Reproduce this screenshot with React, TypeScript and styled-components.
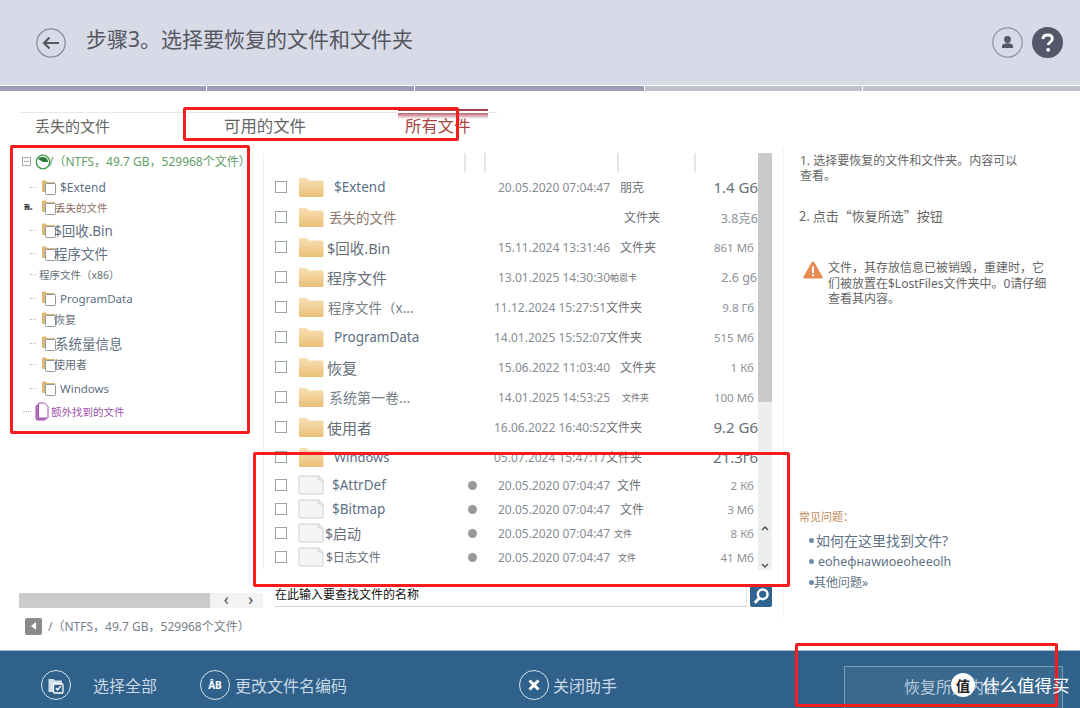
import React from 'react'
import styled, { createGlobalStyle } from 'styled-components'

const GlobalStyle = createGlobalStyle`
  html, body {
    margin: 0;
    padding: 0;
    background: #fff;
  }
  body {
    font-family: "Noto Sans", "Noto Sans CJK SC", sans-serif;
  }
`

const Page = styled.div`
  position: relative;
  width: 1080px;
  height: 708px;
  overflow: hidden;
  display: flex;
  flex-direction: column;
`

/* header */
const Header = styled.div`
  height: 85px;
  flex: none;
  background: #d8dae8;
  display: flex;
  align-items: center;
  padding: 0 17px 0 36px;
  box-sizing: border-box;
`

const Title = styled.div`
  margin: -10px 0 0 20px;
  font-size: 21px;
  color: #55585f;
  flex: 1;
`

const HeaderIcons = styled.div`
  display: flex;
  gap: 9px;
`

const Progress = styled.div`
  height: 5px;
  flex: none;
  display: flex;
  gap: 1px;
  margin-top: 1px;
`

const Segment = styled.div<{ $w: number; $done: boolean }>`
  width: ${(p) => p.$w}px;
  flex: none;
  background: ${(p) => (p.$done ? '#9b9eb6' : '#bfc1d0')};
`

/* tabs */
const Tabs = styled.div`
  margin: 21px 0 0 20px;
  width: 477px;
  height: 24px;
  border-top: 1px solid #e8e8ec;
  display: flex;
  align-items: center;
`

const Tab = styled.div<{ $w: number; $pl?: number; $size?: number; $active?: boolean }>`
  width: ${(p) => p.$w}px;
  flex: none;
  box-sizing: border-box;
  padding-left: ${(p) => p.$pl ?? 0}px;
  font-size: ${(p) => p.$size ?? 16.4}px;
  color: ${(p) => (p.$active ? '#a8453f' : '#666')};
`

const Content = styled.div`
  flex: 1;
  display: grid;
  grid-template-columns: 263px 520px 1fr;
  min-height: 0;
`

/* left tree */
const TreeCol = styled.div`
  display: flex;
  flex-direction: column;
  padding-top: 11px;
`

const TreeBox = styled.div`
  height: 445px;
`

const TreeRow = styled.div<{ $h: number; $pl?: number }>`
  height: ${(p) => p.$h}px;
  display: flex;
  align-items: center;
  padding-left: ${(p) => p.$pl ?? 30}px;
  white-space: nowrap;
`

const Expander = styled.div`
  width: 7px;
  height: 7px;
  border: 1px solid #aaa;
  margin-right: 4px;
  background: linear-gradient(#aaa, #aaa) center / 5px 1px no-repeat;
  flex: none;
`

const Connector = styled.div<{ $w?: number; $mr?: number }>`
  width: ${(p) => p.$w ?? 6}px;
  height: 0;
  border-top: 1px dotted #bbb;
  margin-right: ${(p) => p.$mr ?? 6}px;
  flex: none;
`

const TinyGlyph = styled.div`
  width: 18px;
  margin-left: -6px;
  font-size: 6px;
  line-height: 8px;
  color: #111;
  font-weight: 700;
  flex: none;
`

const TreeLabel = styled.div<{ $size: number; $color: string; $ml: number }>`
  font-size: ${(p) => p.$size}px;
  color: ${(p) => p.$color};
  margin-left: ${(p) => p.$ml}px;
`

const HScroll = styled.div`
  margin-left: 19px;
  width: 244px;
  height: 15px;
  display: flex;
  background: #f2f3f4;
  color: #444;
  font-size: 16px;
  line-height: 13px;
`

const HThumb = styled.div`
  width: 191px;
  background: #cbcbcb;
`

const HArrows = styled.div`
  flex: 1;
  display: flex;
  justify-content: space-around;
  padding-left: 4px;
`

const Crumb = styled.div`
  margin: 9px 0 0 25px;
  display: flex;
  align-items: center;
  font-size: 12px;
  color: #77808a;
  white-space: nowrap;
`

const CrumbBack = styled.div`
  width: 17px;
  height: 17px;
  background: #8b8b8b;
  border-radius: 2px;
  margin-right: 6px;
  display: flex;
  align-items: center;
  justify-content: center;
  &::before {
    content: '';
    border: 4px solid transparent;
    border-right: 5px solid #fff;
    border-left: 0;
  }
`

/* table */
const TableCol = styled.div`
  display: flex;
  flex-direction: column;
  padding-top: 16px;
`

const TableWrap = styled.div`
  width: 509px;
  height: 417px;
  display: flex;
  border-left: 1px solid #eef0f2;
  box-sizing: border-box;
`

const TableMain = styled.div`
  width: 494px;
  flex: none;
`

const HeaderCells = styled.div`
  height: 19px;
  display: flex;
  padding-left: 200px;
`

const HeaderCell = styled.div<{ $w: number }>`
  width: ${(p) => p.$w}px;
  flex: none;
  border-left: 2px solid #e4e6e8;
  box-sizing: border-box;
`

const Row = styled.div<{ $compact?: boolean }>`
  height: ${(p) => (p.$compact ? 24 : 30)}px;
  display: grid;
  grid-template-columns: 12px 26px 155px 10px 222px 1fr;
  align-items: center;
  padding-left: 11px;
  white-space: nowrap;
`

const FileRows = styled.div`
  margin-top: 1px;
`

const Check = styled.div`
  width: 12px;
  height: 12px;
  border: 1px solid #9aa6ae;
  box-sizing: border-box;
  background: #fff;
`

const IconCell = styled.div`
  margin-left: 11px;
  width: 26px;
  display: flex;
`

const Name = styled.div<{ $size: number; $ml: number; $color: string }>`
  font-size: ${(p) => p.$size}px;
  margin-left: ${(p) => p.$ml + 11}px;
  color: ${(p) => p.$color};
`

const Dot = styled.div`
  width: 9px;
  height: 9px;
  border-radius: 50%;
  background: #999;
`

const Meta = styled.div`
  display: flex;
  align-items: center;
`

const DateText = styled.div<{ $ml: number }>`
  margin-left: ${(p) => p.$ml}px;
  font-size: 12px;
  color: #878d94;
`

const TypeText = styled.div<{ $size: number; $ml: number }>`
  margin-left: ${(p) => p.$ml}px;
  font-size: ${(p) => p.$size}px;
  color: #6d7176;
`

const SizeText = styled.div<{ $size: number; $mr: number }>`
  text-align: right;
  font-size: ${(p) => p.$size}px;
  margin-right: ${(p) => p.$mr}px;
  color: ${(p) => (p.$size > 14 ? '#6a7078' : '#8c9298')};
`

const VScroll = styled.div`
  width: 14px;
  flex: none;
  height: 417px;
  background: #eceef0;
  display: flex;
  flex-direction: column;
`

const VThumb = styled.div`
  height: 249px;
  background: #c9c9c9;
`

const VArrows = styled.div`
  margin-top: auto;
  height: 46px;
  display: flex;
  flex-direction: column;
  justify-content: space-between;
  align-items: center;
`

const SearchRow = styled.div`
  margin: 15px 0 0 12px;
  width: 497px;
  height: 22px;
  display: flex;
  gap: 3px;
`

const SearchInput = styled.div`
  flex: 1;
  border-bottom: 1px solid #cfd3d6;
  border-right: 1px solid #e4e6e8;
  font-size: 12px;
  color: #111;
  line-height: 20px;
`

const SearchButton = styled.div`
  width: 22px;
  height: 22px;
  background: #2f6390;
  border-radius: 2px;
  display: flex;
  align-items: center;
  justify-content: center;
`

/* side */
const Side = styled.div`
  height: 470px;
  margin-top: 11px;
  border-left: 1px solid #f2f2f2;
  padding-left: 16px;
  padding-right: 20px;
  font-size: 12px;
  line-height: 15px;
  color: #666;
  display: flex;
  flex-direction: column;
`

const SideNote = styled.div`
  margin-top: 5px;
`

const SideStep = styled.div`
  margin-top: 24px;
  font-family: "Noto Sans CJK SC", sans-serif;
  font-size: 13px;
  line-height: 18px;
  margin-left: -1px;
`

const Warning = styled.div`
  margin-top: 35px;
  display: flex;
  gap: 5px;
  margin-left: 3px;
`

const WarningBadge = styled.svg`
  flex: none;
  margin-top: 1px;
`

const WarningText = styled.div`
  width: 222px;
  line-height: 15.5px;
`

const Faq = styled.div`
  margin-top: 202px;
  margin-left: -1px;
  display: flex;
  flex-direction: column;
`

const FaqTitle = styled.div`
  font-size: 11px;
  color: #c28a58;
  height: 21px;
`

const FaqItem = styled.div<{ $size: number; $h: number; $dx: number }>`
  height: ${(p) => p.$h}px;
  display: flex;
  align-items: center;
  margin-left: 10px;
  font-size: ${(p) => p.$size}px;
  color: #5f7386;
  white-space: nowrap;
  &::before {
    content: '';
    width: 5px;
    height: 5px;
    border-radius: 50%;
    background: #6b8ba6;
    margin-right: ${(p) => p.$dx}px;
    flex: none;
  }
`

/* footer */
const Footer = styled.div`
  height: 58px;
  flex: none;
  background: #30618b;
  border-top: 1px solid #9fb8cb;
  box-sizing: border-box;
  display: flex;
  align-items: center;
  padding: 11px 0 0 41px;
  color: #c9d8e5;
  font-size: 16px;
`

const FooterAction = styled.div<{ $w: number; $gap: number }>`
  width: ${(p) => p.$w}px;
  flex: none;
  display: flex;
  align-items: center;
  gap: ${(p) => p.$gap}px;
`

const IconRing = styled.div`
  width: 30px;
  height: 30px;
  border: 1.5px solid #d5e1ea;
  border-radius: 50%;
  box-sizing: border-box;
  display: flex;
  align-items: center;
  justify-content: center;
  flex: none;
  color: #fff;
  font-size: 10px;
  font-weight: 700;
`

const RecoverButton = styled.div`
  align-self: flex-end;
  margin: 0 17px 0 auto;
  width: 219px;
  height: 42px;
  border: 1px solid #7d9eba;
  border-bottom: 0;
  background: #3a6990;
  box-sizing: border-box;
  padding: 7px 0 0 59px;
  font-size: 16px;
  color: #b9cad9;
`

/* things lying over the page */
const Annotation = styled.div<{ $x: number; $y: number; $w: number; $h: number }>`
  position: absolute;
  left: ${(p) => p.$x}px;
  top: ${(p) => p.$y}px;
  width: ${(p) => p.$w}px;
  height: ${(p) => p.$h}px;
  border: 3px solid #f81c1c;
  border-radius: 2px;
  box-sizing: border-box;
  pointer-events: none;
`

const Smear = styled.div`
  position: absolute;
  left: 398px;
  top: 109px;
  width: 90px;
  height: 10px;
  background: linear-gradient(#a8404a 0 2px, #fff 2px 4px, #b9606a 4px, rgba(255, 255, 255, 0));
`

const Watermark = styled.div`
  position: absolute;
  left: 951px;
  top: 672px;
  display: flex;
  align-items: center;
  gap: 7px;
  font-size: 17.5px;
  color: #fff;
  white-space: nowrap;
`

const WatermarkBadge = styled.div`
  width: 24px;
  height: 24px;
  border-radius: 50%;
  background: #fff;
  color: #222;
  font-size: 14px;
  font-weight: 700;
  display: flex;
  align-items: center;
  justify-content: center;
`

const TreeSvg = styled.svg`
  flex: none;
`

const BackIcon = () => (
  <svg width="30" height="30" viewBox="0 0 30 30" fill="none">
    <circle cx="15" cy="15" r="14.2" stroke="#8a8d98" strokeWidth="1.3" />
    <path d="M23 15H8M13.5 9.5 8 15l5.5 5.5" stroke="#55585f" strokeWidth="2.2" />
  </svg>
)

const UserIcon = () => (
  <svg width="31" height="31" viewBox="0 0 31 31" fill="none">
    <circle cx="15.5" cy="15.5" r="14.7" stroke="#8f919c" strokeWidth="1.2" />
    <circle cx="15.5" cy="12.5" r="3.4" fill="#55586a" />
    <path d="M10 21v-2.4c0-1.4 2.4-2.4 5.5-2.4s5.5 1 5.5 2.4V21z" fill="#55586a" />
  </svg>
)

const HelpIcon = () => (
  <svg width="31" height="31" viewBox="0 0 31 31" fill="none">
    <circle cx="15.5" cy="15.5" r="15.5" fill="#55586a" />
    <path d="M10.8 12c.3-2.7 2.2-4 4.8-4 2.8 0 4.7 1.5 4.7 3.8 0 3.2-4 3.2-4 6.2" stroke="#fff" strokeWidth="2.8" />
    <circle cx="16.2" cy="22.8" r="1.9" fill="#fff" />
  </svg>
)

const Folder = () => (
  <svg width="26" height="20" viewBox="0 0 26 20">
    <defs>
      <linearGradient id="fold" x1="0" y1="0" x2="0" y2="1">
        <stop offset="0" stopColor="#f7e0b4" />
        <stop offset="1" stopColor="#e9bf78" />
      </linearGradient>
    </defs>
    <path d="M1 2.5C1 1.5 1.7 1 2.5 1h6l2.5 2.5h13c1 0 1.5.6 1.5 1.5v13.5c0 .8-.6 1.5-1.5 1.5h-22C1.6 20 1 19.3 1 18.5z" fill="url(#fold)" />
  </svg>
)

const DocIcon = () => (
  <svg width="26" height="20" viewBox="0 0 26 20" fill="none">
    <path d="M1 2c0-.6.4-1 1-1h19l4 4v13c0 .6-.4 1-1 1H2c-.6 0-1-.4-1-1z" fill="#f5f5f5" stroke="#cfcfcf" />
    <path d="M21 1v4h4" stroke="#cfcfcf" />
  </svg>
)

const TreeFolder = () => (
  <TreeSvg width="14" height="15" viewBox="0 0 14 15">
    <path d="M0 1.5C0 1 .5.5 1 .5h3l1 1.5h7.5c.5 0 .5.5.5 1V11c0 .5-.5 1-1 1H1c-.5 0-1-.5-1-1z" fill="#dcb877" />
    <rect x="3.5" y="3.5" width="10" height="11" rx="1" fill="#fff" stroke="#8e979e" />
  </TreeSvg>
)

const RootIcon = () => (
  <TreeSvg width="17" height="17" viewBox="0 0 17 17" fill="none">
    <circle cx="8" cy="9" r="6.8" stroke="#3f9a46" strokeWidth="1.3" />
    <path d="M8 4a5 5 0 0 1 5 5H8z" fill="#2f7a38" />
    <path d="M3 6a5 5 0 0 1 5-2v5z" fill="#2f7a38" />
  </TreeSvg>
)

const ExtraIcon = () => (
  <TreeSvg width="14" height="19" viewBox="0 0 14 19" fill="none">
    <rect x="1" y="3" width="10" height="15" rx="1.5" fill="#b57ac0" stroke="#a04cae" />
    <path d="M3.5 1h6L13 4.5V16H3.5z" fill="#fff" stroke="#a04cae" />
  </TreeSvg>
)

const WarningIcon = () => (
  <WarningBadge width="20" height="18" viewBox="0 0 20 18">
    <path d="M10 .5c.6 0 1 .3 1.3.8l8.2 14.4c.5.9 0 1.8-1 1.8H1.5c-1 0-1.5-.9-1-1.8L8.7 1.3c.3-.5.7-.8 1.3-.8z" fill="#ea8a50" />
    <rect x="9" y="5.5" width="2" height="6.5" fill="#fff" />
    <rect x="9" y="13.2" width="2" height="2" fill="#fff" />
  </WarningBadge>
)

const SearchGlyph = () => (
  <svg width="18" height="18" viewBox="0 0 16 16" fill="none">
    <circle cx="9.5" cy="6.5" r="4.3" stroke="#fff" strokeWidth="2.2" />
    <path d="M6.5 10 2.5 14" stroke="#fff" strokeWidth="2.6" />
  </svg>
)

const SelectAllIcon = () => (
  <svg width="18" height="18" viewBox="0 0 18 18" fill="none">
    <path d="M1.5 3h5L8 4.5h7V8H6v8H1.5z" fill="#d5e1ea" />
    <rect x="6.5" y="8" width="9.5" height="9" rx="1" stroke="#fff" strokeWidth="1.3" />
    <path d="m9 12 1.5 2L14 10" stroke="#fff" strokeWidth="1.3" />
  </svg>
)

const CloseGlyph = () => (
  <svg width="14" height="14" viewBox="0 0 14 14" fill="none">
    <path d="m2.5 2.5 9 9M11.5 2.5l-9 9" stroke="#fff" strokeWidth="3" />
  </svg>
)

const Chevron = ({ up }: { up?: boolean }) => (
  <svg width="10" height="8" viewBox="0 0 10 8" fill="none">
    <path d={up ? 'M2 6l3-3 3 3' : 'M2 2l3 3 3-3'} stroke="#555" strokeWidth="1.5" />
  </svg>
)

const treeItems = [
  { label: '$Extend', size: 12, color: '#5c6f85', ml: 4, h: 26 },
  { label: '丢失的文件', size: 10.5, color: '#8a6b62', ml: -1, h: 14, glyph: true },
  { label: '$回收.Bin', size: 13.5, color: '#5f6f80', ml: -2, h: 32 },
  { label: '程序文件', size: 13.5, color: '#5f6f80', ml: -2, h: 14 },
  { label: '程序文件（x86）', size: 10.5, color: '#666f78', ml: 0, h: 28, bare: true },
  { label: 'ProgramData', size: 11.5, color: '#5c6f85', ml: 4, h: 20 },
  { label: '恢复', size: 11, color: '#666f78', ml: -2, h: 22 },
  { label: '系统量信息', size: 13.5, color: '#5f6f80', ml: -1, h: 26 },
  { label: '使用者', size: 11, color: '#666f78', ml: -2, h: 16 },
  { label: 'Windows', size: 11.5, color: '#5c6f85', ml: 4, h: 32 },
]

const folders = [
  { name: '$Extend', size: 13.5, ml: 10, color: '#5c6f85', date: '20.05.2020 07:04:47', dx: 20, type: '朋克', tSize: 12, tMl: 10, total: '1.4 G6', sSize: 15, mr: 0 },
  { name: '丢失的文件', size: 13.5, ml: 5, color: '#8a7468', date: '', dx: 20, type: '文件夹', tSize: 12, tMl: 126, total: '3.8克6', sSize: 12.5, mr: 0 },
  { name: '$回收.Bin', size: 14.5, ml: 3, color: '#666f78', date: '15.11.2024 13:31:46', dx: 20, type: '文件夹', tSize: 12, tMl: 10, total: '861 Мб', sSize: 11.5, mr: 4 },
  { name: '程序文件', size: 15, ml: 3, color: '#666f78', date: '13.01.2025 14:30:30', dx: 20, type: '帕恩卡', tSize: 9, tMl: 0, total: '2.6 g6', sSize: 12.5, mr: 1 },
  { name: '程序文件（x...', size: 13.5, ml: 4, color: '#777f87', date: '11.12.2024 15:27:51', dx: 16, type: '文件夹', tSize: 12, tMl: 0, total: '9.8 Гб', sSize: 11.5, mr: 4 },
  { name: 'ProgramData', size: 13.5, ml: 10, color: '#5c6f85', date: '14.01.2025 15:52:07', dx: 16, type: '文件夹', tSize: 12, tMl: 0, total: '515 Мб', sSize: 11.5, mr: 4 },
  { name: '恢复', size: 15, ml: 3, color: '#666f78', date: '15.06.2022 11:03:40', dx: 20, type: '文件夹', tSize: 12, tMl: 10, total: '1 Кб', sSize: 11.5, mr: 4 },
  { name: '系统第一卷...', size: 14, ml: 5, color: '#777f87', date: '14.01.2025 14:53:25', dx: 20, type: '文件夹', tSize: 9, tMl: 12, total: '100 Мб', sSize: 11.5, mr: 4 },
  { name: '使用者', size: 15, ml: 3, color: '#666f78', date: '16.06.2022 16:40:52', dx: 16, type: '文件夹', tSize: 12, tMl: 0, total: '9.2 G6', sSize: 15, mr: 0 },
  { name: 'Windows', size: 13, ml: 10, color: '#5c6f85', date: '05.07.2024 15:47:17', dx: 16, type: '文件夹', tSize: 12, tMl: 0, total: '21.3г6', sSize: 15, mr: 0 },
]

const files = [
  { name: '$AttrDef', size: 13.5, ml: 8, color: '#5c6f85', type: '文件', tSize: 12, tMl: 7, total: '2 Кб' },
  { name: '$Bitmap', size: 13.5, ml: 8, color: '#5c6f85', type: '文件', tSize: 12, tMl: 10, total: '3 Мб' },
  { name: '$启动', size: 14, ml: 1, color: '#666f78', type: '文件', tSize: 9, tMl: 4, total: '8 Кб' },
  { name: '$日志文件', size: 12, ml: 2, color: '#666f78', type: '文件', tSize: 9, tMl: 8, total: '41 Мб' },
]

const App = () => {
  return (
    <Page>
      <GlobalStyle />
      <Header>
        <BackIcon />
        <Title>步骤3。选择要恢复的文件和文件夹</Title>
        <HeaderIcons>
          <UserIcon />
          <HelpIcon />
        </HeaderIcons>
      </Header>
      <Progress>
        <Segment $w={206} $done />
        <Segment $w={207} $done />
        <Segment $w={229} $done />
        <Segment $w={217} $done={false} />
        <Segment $w={217} $done={false} />
      </Progress>
      <Tabs>
        <Tab $w={204} $pl={15} $size={15}>丢失的文件</Tab>
        <Tab $w={181}>可用的文件</Tab>
        <Tab $w={80} $active>所有文件</Tab>
      </Tabs>
      <Content>
        <TreeCol>
          <TreeBox>
            <TreeRow $h={26} $pl={22}>
              <Expander />
              <RootIcon />
              <TreeLabel $size={12} $color="#5f9e64" $ml={-3}>/（NTFS，49.7 GB，529968个文件）</TreeLabel>
            </TreeRow>
            {treeItems.map((item) => (
              <TreeRow key={item.label} $h={item.h}>
                {item.glyph ? <TinyGlyph>我。</TinyGlyph> : <Connector $mr={item.bare ? 3 : 6} />}
                {!item.bare && <TreeFolder />}
                <TreeLabel $size={item.size} $color={item.color} $ml={item.ml}>{item.label}</TreeLabel>
              </TreeRow>
            ))}
            <TreeRow $h={14} $pl={23}>
              <Connector $w={8} $mr={4} />
              <ExtraIcon />
              <TreeLabel $size={10.5} $color="#a050ac" $ml={2}>额外找到的文件</TreeLabel>
            </TreeRow>
          </TreeBox>
          <HScroll>
            <HThumb />
            <HArrows>
              <span>‹</span>
              <span>›</span>
            </HArrows>
          </HScroll>
          <Crumb>
            <CrumbBack />
            /（NTFS，49.7 GB，529968个文件）
          </Crumb>
        </TreeCol>
        <TableCol>
          <TableWrap>
            <TableMain>
              <HeaderCells>
                <HeaderCell $w={20} />
                <HeaderCell $w={133} />
                <HeaderCell $w={77} />
                <HeaderCell $w={62} />
              </HeaderCells>
              {folders.map((row) => (
                <Row key={row.name}>
                  <Check />
                  <IconCell><Folder /></IconCell>
                  <Name $size={row.size} $ml={row.ml} $color={row.color}>{row.name}</Name>
                  <span />
                  <Meta>
                    <DateText $ml={row.dx}>{row.date}</DateText>
                    <TypeText $size={row.tSize} $ml={row.tMl}>{row.type}</TypeText>
                  </Meta>
                  <SizeText $size={row.sSize} $mr={row.mr}>{row.total}</SizeText>
                </Row>
              ))}
              <FileRows>
                {files.map((row) => (
                  <Row key={row.name} $compact>
                    <Check />
                    <IconCell><DocIcon /></IconCell>
                    <Name $size={row.size} $ml={row.ml} $color={row.color}>{row.name}</Name>
                    <Dot />
                    <Meta>
                      <DateText $ml={20}>20.05.2020 07:04:47</DateText>
                      <TypeText $size={row.tSize} $ml={row.tMl}>{row.type}</TypeText>
                    </Meta>
                    <SizeText $size={11.5} $mr={4}>{row.total}</SizeText>
                  </Row>
                ))}
              </FileRows>
            </TableMain>
            <VScroll>
              <VThumb />
              <VArrows>
                <Chevron up />
                <Chevron />
              </VArrows>
            </VScroll>
          </TableWrap>
          <SearchRow>
            <SearchInput>在此输入要查找文件的名称</SearchInput>
            <SearchButton><SearchGlyph /></SearchButton>
          </SearchRow>
        </TableCol>
        <Side>
          <SideNote>1. 选择要恢复的文件和文件夹。内容可以<br />查看。</SideNote>
          <SideStep>2. 点击“恢复所选”按钮</SideStep>
          <Warning>
            <WarningIcon />
            <WarningText>文件，其存放信息已被销毁，重建时，它们被放置在$LostFiles文件夹中。0请仔细查看其内容。</WarningText>
          </Warning>
          <Faq>
            <FaqTitle>常见问题：</FaqTitle>
            <FaqItem $size={14} $h={22} $dx={2}>如何在这里找到文件?</FaqItem>
            <FaqItem $size={12.5} $h={20} $dx={4}>eohефнawиoeoheeolh</FaqItem>
            <FaqItem $size={12} $h={22} $dx={0}>其他问题»</FaqItem>
          </Faq>
        </Side>
      </Content>
      <Footer>
        <FooterAction $w={159} $gap={22}>
          <IconRing><SelectAllIcon /></IconRing>
          选择全部
        </FooterAction>
        <FooterAction $w={319} $gap={5}>
          <IconRing>ÂB</IconRing>
          更改文件名编码
        </FooterAction>
        <FooterAction $w={120} $gap={4}>
          <IconRing><CloseGlyph /></IconRing>
          关闭助手
        </FooterAction>
        <RecoverButton>恢复所选内容</RecoverButton>
      </Footer>
      <Smear />
      <Annotation $x={183} $y={107} $w={276} $h={34} />
      <Annotation $x={10} $y={145} $w={240} $h={289} />
      <Annotation $x={253} $y={452} $w={537} $h={135} />
      <Annotation $x={795} $y={643} $w={263} $h={64} />
      <Watermark>
        <WatermarkBadge>值</WatermarkBadge>
        什么值得买
      </Watermark>
    </Page>
  )
}

export default App
